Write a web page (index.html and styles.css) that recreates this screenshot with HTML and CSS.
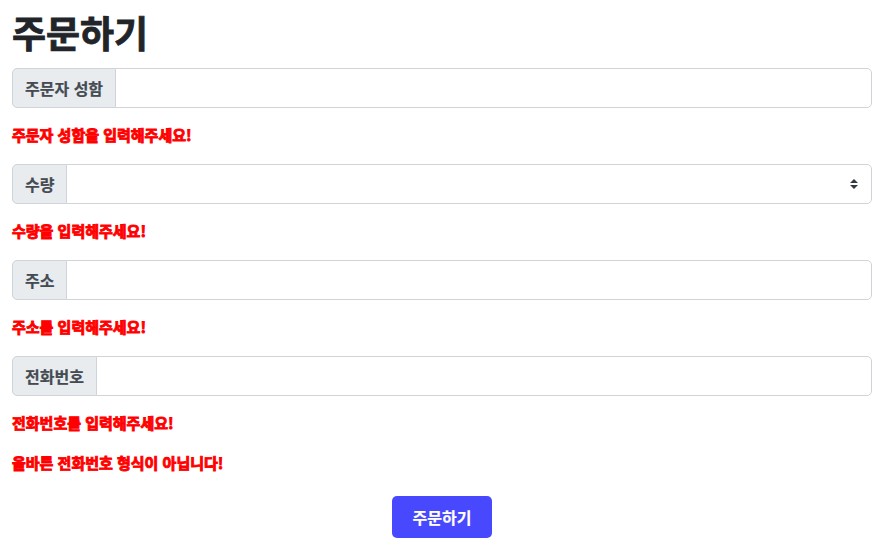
FILE: index.html
```html
<!DOCTYPE html>
<html lang="ko">
<head>
<meta charset="utf-8">
<link rel="stylesheet" href="styles.css">
</head>
<body>
<div class="page">
  <h1 class="title">주문하기</h1>

  <div class="group">
    <span class="label">주문자 성함</span>
    <input class="control" type="text">
  </div>
  <p class="error">주문자 성함을 입력해주세요!</p>

  <div class="group">
    <span class="label">수량</span>
    <div class="control select">
      <svg class="caret" width="8" height="12" viewBox="0 0 8 12"><path d="M0 5 L4 1 L8 5 Z M0 7 L4 11 L8 7 Z" fill="#343a40"/></svg>
    </div>
  </div>
  <p class="error">수량을 입력해주세요!</p>

  <div class="group">
    <span class="label">주소</span>
    <input class="control" type="text">
  </div>
  <p class="error">주소를 입력해주세요!</p>

  <div class="group">
    <span class="label">전화번호</span>
    <input class="control" type="text">
  </div>
  <p class="error">전화번호를 입력해주세요!</p>
  <p class="error">올바른 전화번호 형식이 아닙니다!</p>

  <div class="actions">
    <button class="submit" type="button">주문하기</button>
  </div>
</div>
</body>
</html>
```

FILE: styles.css
```css
html, body {
  margin: 0;
  padding: 0;
  background: #fff;
}
body {
  font-family: "Noto Sans CJK KR", "Noto Sans", sans-serif;
  color: #212529;
}
.page {
  padding: 6px 8px 0 12px;
}
.title {
  margin: 0 0 10px;
  font-size: 37px;
  font-weight: 700;
  line-height: 52px;
  color: #212529;
  -webkit-text-stroke: 0.8px #212529;
}
.group {
  display: flex;
  height: 40px;
  box-sizing: border-box;
}
.label {
  display: flex;
  align-items: center;
  padding: 0 12px;
  background: #e9ecef;
  border: 1px solid #ced4da;
  border-radius: 5px 0 0 5px;
  font-size: 16px;
  font-weight: 700;
  color: #454b52;
  -webkit-text-stroke: 0.2px #454b52;
  white-space: nowrap;
}
.control {
  flex: 1;
  min-width: 0;
  box-sizing: border-box;
  height: 40px;
  margin: 0 0 0 -1px;
  border: 1px solid #ced4da;
  border-radius: 0 5px 5px 0;
  background: #fff;
  font: inherit;
  outline: none;
}
.select {
  display: flex;
  align-items: center;
  justify-content: flex-end;
  padding-right: 13px;
}
.error {
  margin: 16px 0 19px;
  font-size: 15px;
  line-height: 21px;
  font-weight: 700;
  color: #ff0000;
  -webkit-text-stroke: 0.9px #ff0000;
}
.actions {
  display: flex;
  justify-content: center;
  padding-top: 4px;
}
.submit {
  width: 100px;
  height: 42px;
  border: none;
  border-radius: 5px;
  background: #4848ff;
  color: #fff;
  font-family: inherit;
  font-size: 16px;
  font-weight: 700;
  -webkit-text-stroke: 0.2px #fff;
}
```
